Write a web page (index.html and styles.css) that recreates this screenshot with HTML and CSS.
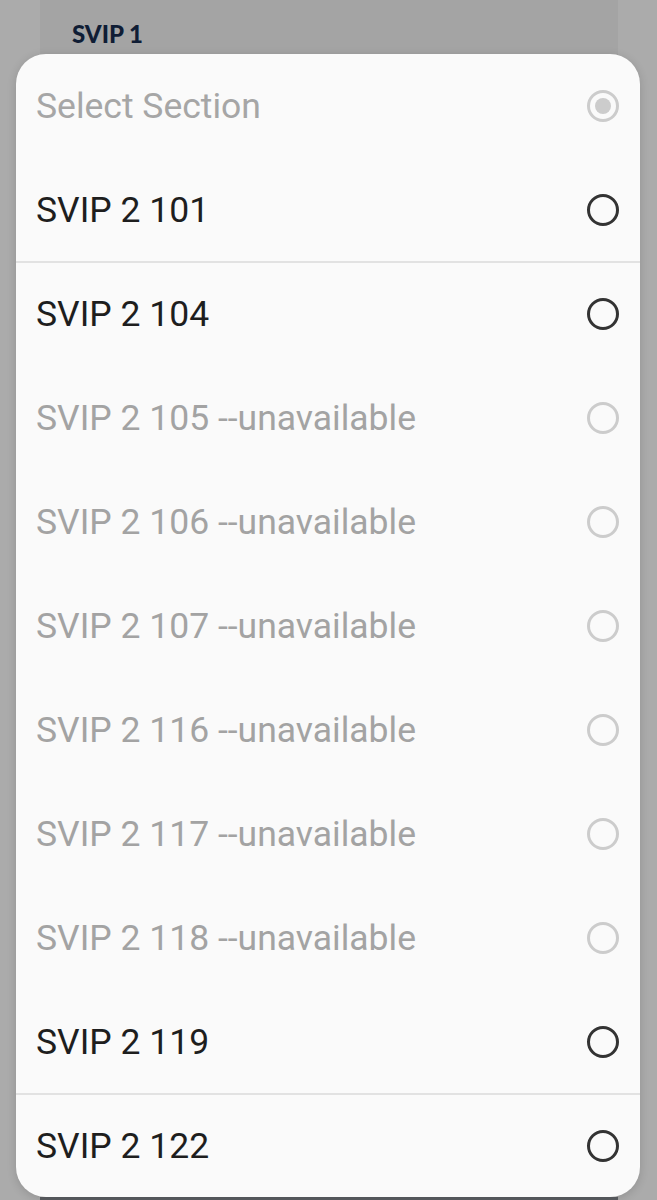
FILE: index.html
```html
<!DOCTYPE html>
<html>
<head>
<meta charset="utf-8">
<link rel="stylesheet" href="styles.css">
</head>
<body>
<div class="page">
  <div class="card">
    <div class="card-title">SVIP 1</div>
    <div class="card-fill"></div>
    <div class="card-button"></div>
  </div>
</div>
<div class="dialog">
  <div class="row title"><span class="label">Select Section</span><span class="radio checked"></span></div>
  <div class="row"><span class="label">SVIP 2 101</span><span class="radio"></span></div>
  <div class="divider"></div>
  <div class="row"><span class="label">SVIP 2 104</span><span class="radio"></span></div>
  <div class="row off"><span class="label">SVIP 2 105 --unavailable</span><span class="radio"></span></div>
  <div class="row off"><span class="label">SVIP 2 106 --unavailable</span><span class="radio"></span></div>
  <div class="row off"><span class="label">SVIP 2 107 --unavailable</span><span class="radio"></span></div>
  <div class="row off"><span class="label">SVIP 2 116 --unavailable</span><span class="radio"></span></div>
  <div class="row off"><span class="label">SVIP 2 117 --unavailable</span><span class="radio"></span></div>
  <div class="row off"><span class="label">SVIP 2 118 --unavailable</span><span class="radio"></span></div>
  <div class="row"><span class="label">SVIP 2 119</span><span class="radio"></span></div>
  <div class="divider"></div>
  <div class="row"><span class="label">SVIP 2 122</span><span class="radio"></span></div>
</div>
</body>
</html>
```
FILE: styles.css
```css
html, body {
  margin: 0;
  padding: 0;
}
body {
  background: #ababab;
  width: 657px;
  height: 1200px;
  overflow: hidden;
  position: relative;
  font-family: Roboto, "Liberation Sans", sans-serif;
}
.page {
  height: 1200px;
  padding: 0 39px 0 40px;
}
.card {
  background: #a4a4a4;
  height: 1200px;
  display: flex;
  flex-direction: column;
}
.card-title {
  padding: 20px 0 0 32px;
  font-family: Lato, "Liberation Sans", sans-serif;
  font-weight: 900;
  font-size: 24px;
  color: #0f1d35;
  line-height: 28px;
}
.card-fill {
  flex: 1;
}
.card-button {
  height: 3px;
  background: #5c5f63;
}
.dialog {
  position: absolute;
  left: 16px;
  top: 54px;
  width: 624px;
  height: 1143px;
  background: #fafafa;
  border-radius: 30px;
  overflow: hidden;
  box-shadow: 0 2px 10px rgba(0,0,0,0.15);
}
.row {
  height: 104px;
  display: flex;
  align-items: center;
  justify-content: space-between;
  padding: 0 21px 0 20px;
}
.label {
  font-size: 35.5px;
  color: #1e1e1e;
  letter-spacing: 0;
}
.title .label {
  color: #a6a6a6;
}
.off .label {
  color: #a3a3a3;
}
.radio {
  width: 32px;
  height: 32px;
  border: 3px solid #333333;
  border-radius: 50%;
  box-sizing: border-box;
  position: relative;
}
.off .radio, .title .radio {
  border-color: #cccccc;
}
.radio.checked::after {
  content: "";
  position: absolute;
  left: 50%;
  top: 50%;
  width: 16px;
  height: 16px;
  margin: -8px 0 0 -8px;
  border-radius: 50%;
  background: #cccccc;
}
.divider {
  height: 2px;
  margin-top: -1px;
  margin-bottom: -1px;
  background: #e2e2e2;
}
```
